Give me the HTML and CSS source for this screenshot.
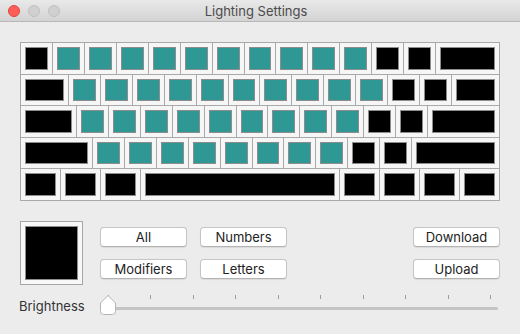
FILE: index.html
```html
<!DOCTYPE html>
<html lang="en">
<head>
    <meta charset="UTF-8">
    <title>Lighting Settings</title>
    <link rel="stylesheet" href="styles.css">
</head>
<body>
    <div class="titlebar">
        <div class="lights">
            <span class="light close"></span>
            <span class="light"></span>
            <span class="light"></span>
        </div>
        <div class="title">Lighting Settings</div>
    </div>

    <main class="content">
        <div class="keyboard" id="keyboard"></div>

        <div class="controls">
            <div class="well"><div class="swatch"></div></div>
            <div class="buttons">
                <button class="btn">All</button>
                <button class="btn">Numbers</button>
                <button class="btn">Modifiers</button>
                <button class="btn">Letters</button>
            </div>
            <div class="buttons side">
                <button class="btn">Download</button>
                <button class="btn">Upload</button>
            </div>
        </div>

        <div class="brightness">
            <label>Brightness</label>
            <div class="slider">
                <div class="ticks">
                    <i></i><i></i><i></i><i></i><i></i><i></i><i></i><i></i><i></i><i></i>
                </div>
                <div class="track"></div>
                <svg class="knob" width="18" height="22" viewBox="0 0 18 22">
                    <path d="M9 1.5 L16.5 9 V17.5 Q16.5 20.5 13.5 20.5 H4.5 Q1.5 20.5 1.5 17.5 V9 Z" fill="#fff" stroke="#b4b4b4" stroke-width="1"/>
                </svg>
            </div>
        </div>
    </main>

    <script>
        // widths in quarter keys, t = lit key
        const rows = [
            [[4], [4,1],[4,1],[4,1],[4,1],[4,1],[4,1],[4,1],[4,1],[4,1],[4,1], [4], [4], [8]],
            [[6], [4,1],[4,1],[4,1],[4,1],[4,1],[4,1],[4,1],[4,1],[4,1],[4,1], [4], [4], [6]],
            [[7], [4,1],[4,1],[4,1],[4,1],[4,1],[4,1],[4,1],[4,1],[4,1], [4], [4], [9]],
            [[9], [4,1],[4,1],[4,1],[4,1],[4,1],[4,1],[4,1],[4,1], [4], [4], [11]],
            [[5], [5], [5], [25], [5], [5], [5], [5]]
        ];
        const board = document.getElementById('keyboard');
        rows.forEach(row => {
            row.forEach(([w, lit]) => {
                let key = document.createElement('div');
                key.className = 'key';
                key.style.gridColumn = 'span ' + w;
                let cap = document.createElement('div');
                cap.className = lit ? 'cap lit' : 'cap';
                key.appendChild(cap);
                board.appendChild(key);
            });
        });
    </script>
</body>
</html>
```

FILE: styles.css
```css
* {
    margin: 0;
    padding: 0;
    box-sizing: border-box;
}
body {
    width: 520px;
    height: 334px;
    overflow: hidden;
    background-color: #ececec;
    font-family: 'Inter', 'Roboto', sans-serif;
    font-size: 13px;
    color: #222;
}
.titlebar {
    height: 22px;
    display: flex;
    align-items: center;
    position: relative;
    background: linear-gradient(180deg, #e9e9e9, #d3d3d3);
    border-bottom: 1px solid #b8b8b8;
}
.lights {
    display: flex;
    gap: 8px;
    padding-left: 8px;
}
.light {
    width: 12px;
    height: 12px;
    border-radius: 50%;
    background-color: #d0d0d0;
    border: 1px solid #c0c0c0;
}
.light.close {
    background-color: #fc5f57;
    border-color: #e0443e;
}
.title {
    flex: 1;
    text-align: center;
    margin-left: -68px;
    color: #4b4b4b;
}
.content {
    padding: 20px 20px 0;
}
.keyboard {
    display: grid;
    grid-template-columns: repeat(60, 1fr);
    grid-auto-rows: 31.6px;
    width: 480px;
    border-left: 1px solid #a9a9a9;
    border-top: 1px solid #a9a9a9;
}
.key {
    border-right: 1px solid #a9a9a9;
    border-bottom: 1px solid #a9a9a9;
    background-color: #f6f6f6;
    padding: 4px;
}
.cap {
    height: 100%;
    background-color: #000;
    border: 1px solid #8d8d8d;
}
.cap.lit {
    background-color: #2f9894;
}
.controls {
    display: flex;
    margin-top: 20px;
}
.well {
    width: 63px;
    height: 64px;
    padding: 4px;
    background-color: #f7f7f7;
    border: 1px solid #a6a6a6;
}
.swatch {
    height: 100%;
    background-color: #000;
    border: 1px solid #8d8d8d;
}
.buttons {
    display: grid;
    grid-template-columns: 87px 87px;
    gap: 12px 13px;
    margin: 6px 0 0 17px;
    align-content: start;
}
.buttons.side {
    grid-template-columns: 87px;
    margin-left: auto;
}
.btn {
    height: 20px;
    font: inherit;
    color: #222;
    background-color: #fff;
    border: 1px solid #c6c6c6;
    border-bottom-color: #b3b3b3;
    border-radius: 4px;
    box-shadow: 0 0.5px 1px rgba(0, 0, 0, 0.08);
}
.brightness {
    display: flex;
    margin-top: 9px;
    margin-left: -1px;
}
.brightness label {
    width: 81px;
    padding-top: 4px;
    color: #333;
}
.slider {
    flex: 1;
    height: 22px;
    position: relative;
}
.ticks {
    display: flex;
    justify-content: space-between;
    padding: 1px 9px 0 8px;
    height: 5px;
}
.ticks i {
    width: 1px;
    height: 4px;
    background-color: #9c9c9c;
}
.track {
    height: 3px;
    margin: 8px 2px 0 6px;
    border-radius: 2px;
    background-color: #c4c4c4;
}
.knob {
    position: absolute;
    left: -1px;
    top: 0;
}
```
